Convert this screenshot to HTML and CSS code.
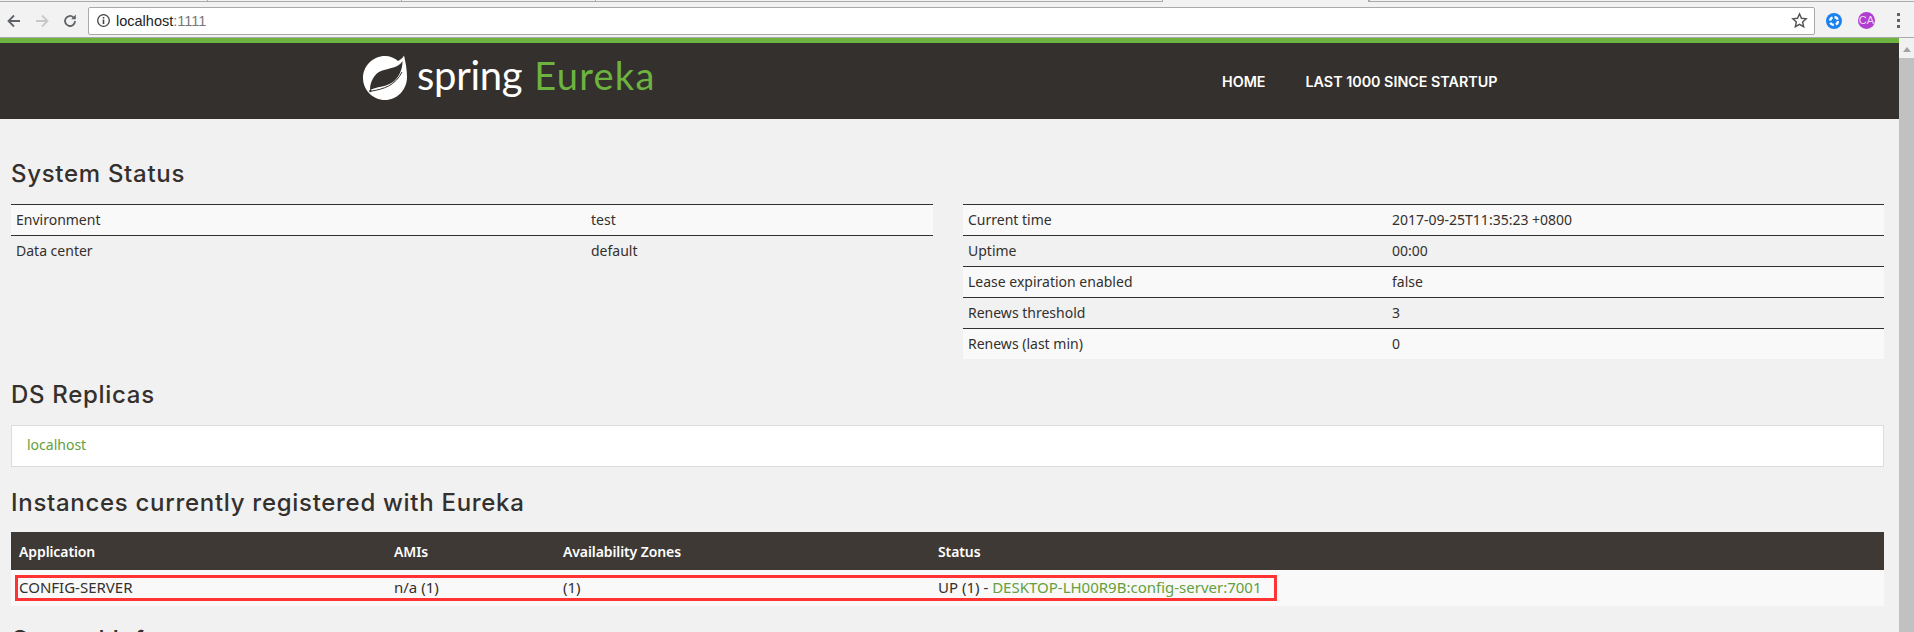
FILE: index.html
```html
<!DOCTYPE html>
<html lang="en">
<head>
  <meta charset="UTF-8" />
  <title>Eureka</title>
  <link rel="stylesheet" href="styles.css">
</head>
<body>
  <div class="tabstrip">
    <span class="tab tab-a"></span>
    <span class="tab"></span>
    <span class="tab"></span>
    <span class="tab tab-wide"></span>
    <span class="tab tab-active"></span>
    <span class="tab tab-rest"></span>
  </div>
  <div class="toolbar">
    <svg class="nav-icon" viewBox="0 0 16 16"><path d="M14 8H3M8 2.500 2.500 8 8 13.500" fill="none" stroke="#5f6368" stroke-width="1.8"/></svg>
    <svg class="nav-icon" viewBox="0 0 16 16"><path d="M2 8h11M8 2.500 13.500 8 8 13.500" fill="none" stroke="#c8c8c8" stroke-width="1.8"/></svg>
    <svg class="nav-icon" viewBox="0 0 16 16"><path d="M13 8a5 5 0 1 1-1.600-3.700" fill="none" stroke="#5f6368" stroke-width="1.8"/><path d="M13.800 1.600v4.600H9.200z" fill="#5f6368"/></svg>
    <div class="omnibox">
      <svg class="info-icon" viewBox="0 0 16 16"><circle cx="8" cy="8" r="6.200" fill="none" stroke="#444" stroke-width="1.4"/><path d="M8 7v4.600M8 4.200v1.600" stroke="#444" stroke-width="1.7"/></svg>
      <span class="host">localhost</span><span class="port">:1111</span>
      <svg class="star-icon" viewBox="0 0 18 18"><path d="M9 2l2.100 4.700 5 .5-3.800 3.400 1.100 5L9 13l-4.400 2.600 1.100-5L1.900 7.200l5-.5z" fill="none" stroke="#555" stroke-width="1.5"/></svg>
    </div>
    <svg class="ext-icon" viewBox="0 0 16 16"><circle cx="8" cy="8" r="8" fill="#1a82f0"/><circle cx="8" cy="8" r="4" fill="none" stroke="#fff" stroke-width="2.4" stroke-dasharray="4.200 2.100"/></svg>
    <div class="ext-badge">CA</div>
    <div class="menu-dots"><i></i><i></i><i></i></div>
  </div>
  <div class="viewport">
    <div class="page">
      <nav class="navbar">
        <div class="brand">
          <svg class="leaf" viewBox="7 9 46 46">
            <path d="M49 9.500C50 14 52 22 52 31 52 44 42 54 30 54 18 54 8 44 8 32 8 20 18 10 30 10c5 0 10 2 13 5 2-1 5-3 6-5.500z" fill="#fff"/>
            <path d="M47.500 15C44 22 34 22 26 25 19 28 15 36 15 44c9-4 16-3 23-8 6-5 9.500-12 9.500-21z" fill="#34302d"/>
            <path d="M17 45c11-2 23-5 30-19" fill="none" stroke="#34302d" stroke-width="1"/>
            <circle cx="15.500" cy="45" r="1.300" fill="#34302d"/>
          </svg>
          <span class="brand-spring">spring</span>
          <span class="brand-eureka">Eureka</span>
        </div>
        <ul class="nav-links">
          <li>Home</li>
          <li>Last 1000 since startup</li>
        </ul>
      </nav>

      <main class="content">
        <h2 class="first">System Status</h2>
        <div class="status-row">
          <table class="info left">
            <tr><td>Environment</td><td>test</td></tr>
            <tr><td>Data center</td><td>default</td></tr>
          </table>
          <table class="info right">
            <tr><td>Current time</td><td>2017-09-25T11:35:23 +0800</td></tr>
            <tr><td>Uptime</td><td>00:00</td></tr>
            <tr><td>Lease expiration enabled</td><td>false</td></tr>
            <tr><td>Renews threshold</td><td>3</td></tr>
            <tr><td>Renews (last min)</td><td>0</td></tr>
          </table>
        </div>

        <h2 class="replicas-title">DS Replicas</h2>
        <div class="replicas"><a>localhost</a></div>

        <h2 class="instances-title">Instances currently registered with Eureka</h2>
        <div class="instances-wrap">
          <table class="instances">
            <thead>
              <tr><th class="c-app">Application</th><th class="c-ami">AMIs</th><th class="c-zone">Availability Zones</th><th>Status</th></tr>
            </thead>
            <tbody>
              <tr>
                <td>CONFIG-SERVER</td>
                <td>n/a (1)</td>
                <td>(1)</td>
                <td>UP (1) - <a>DESKTOP-LH00R9B:config-server:7001</a></td>
              </tr>
            </tbody>
          </table>
          <div class="highlight"></div>
        </div>

        <h2 class="info-title">General Info</h2>
      </main>
    </div>
    <div class="scrollbar">
      <span class="scroll-up"></span>
      <span class="scroll-thumb"></span>
    </div>
  </div>
</body>
</html>
```

FILE: styles.css
```css
html, body {
  margin: 0;
  height: 632px;
  overflow: hidden;
}

body {
  font-family: 'Noto Sans', 'Open Sans', sans-serif;
  font-size: 14px;
  color: #34302d;
  background: #f1f1f1;
}

/* browser chrome */
.tabstrip {
  display: flex;
  height: 4px;
  background: #f2f2f2;
}

.tab {
  width: 193px;
  height: 1px;
  border-bottom: 1px solid #a9a9a9;
  border-right: 1px solid #a9a9a9;
}

.tab-a { width: 207px; }
.tab-wide { width: 566px; }

.tab-active {
  width: 205px;
  height: 2px;
  border-bottom: none;
  background: #f2f2f2;
}

.tab-rest {
  flex: 1;
  border-right: none;
  border-left: 1px solid #a9a9a9;
}

.toolbar {
  display: flex;
  align-items: center;
  height: 34px;
  padding-left: 6px;
  box-sizing: border-box;
  background: #f2f2f2;
  border-bottom: 1px solid #a9a9a9;
}

.nav-icon {
  width: 16px;
  height: 16px;
  margin-right: 12px;
}

.omnibox {
  display: flex;
  align-items: center;
  width: 1727px;
  height: 28px;
  box-sizing: border-box;
  margin-left: -2px;
  padding: 0 6px 0 7px;
  background: #fff;
  border: 1px solid #a9a9a9;
  border-radius: 2px;
  font-family: 'Liberation Sans', sans-serif;
  font-size: 14.500px;
}

.info-icon {
  width: 15px;
  height: 15px;
  margin-right: 5px;
}

.host { color: #222; }
.port { color: #777; }

.star-icon {
  width: 17px;
  height: 17px;
  margin-left: auto;
}

.ext-icon {
  width: 16px;
  height: 16px;
  margin-left: 11px;
}

.ext-badge {
  width: 17px;
  height: 17px;
  margin-left: 16px;
  border-radius: 50%;
  background: #b03fd0;
  color: #f0d8f6;
  font-family: 'Liberation Sans', sans-serif;
  font-size: 11px;
  line-height: 17px;
  text-align: center;
}

.menu-dots {
  display: flex;
  flex-direction: column;
  gap: 3px;
  margin-left: 22px;
}

.menu-dots i {
  display: block;
  width: 3px;
  height: 3px;
  background: #5f6368;
}

/* page */
.viewport {
  display: flex;
  height: 594px;
}

.page {
  flex: 1;
  min-width: 0;
  overflow: hidden;
}

.scrollbar {
  display: flex;
  flex-direction: column;
  width: 15px;
  padding-top: 5px;
  background: #f1f1f1;
}

.scroll-up {
  width: 0;
  height: 0;
  margin: 4px auto 6px;
  border-left: 4px solid transparent;
  border-right: 4px solid transparent;
  border-bottom: 5px solid #a3a3a3;
}

.scroll-thumb {
  flex: 1;
  background: #c1c1c1;
}

.navbar {
  display: flex;
  align-items: center;
  height: 76px;
  padding-left: 362px;
  background: #34302d;
  border-top: 5px solid #6db33f;
}

.brand {
  display: flex;
  align-items: center;
  width: 860px;
  margin-top: -6px;
}

.leaf {
  width: 46px;
  height: 46px;
  margin-right: 9px;
}

.brand-spring {
  margin-top: -6px;
  color: #fff;
  font-family: 'Lato', sans-serif;
  font-size: 40px;
  letter-spacing: -0.300px;
  margin-right: 12px;
}

.brand-eureka {
  margin-top: -6px;
  color: #6db33f;
  font-family: 'Lato', sans-serif;
  font-size: 38px;
  letter-spacing: 1.300px;
}

.nav-links {
  display: flex;
  gap: 40px;
  margin: 0;
  padding: 0;
  list-style: none;
  color: #fff;
  font-family: 'Inter', sans-serif;
  font-size: 14.300px;
  font-weight: 600;
  text-transform: uppercase;
}

.content {
  padding: 0 15px 0 11px;
}

h2 {
  margin: 0;
  box-sizing: border-box;
  font-family: 'Inter', sans-serif;
  font-size: 24px;
  font-weight: 500;
  letter-spacing: 0.700px;
  line-height: 30px;
  color: #34302d;
}

h2.first {
  height: 85px;
  padding-top: 40px;
}

h2.replicas-title {
  height: 59px;
  padding-top: 14px;
}

h2.instances-title {
  height: 65px;
  padding-top: 21px;
}

h2.info-title {
  padding-top: 19px;
}

.status-row {
  display: flex;
  justify-content: space-between;
  height: 162px;
}

table {
  border-collapse: collapse;
  table-layout: fixed;
}

.info {
  width: 922px;
  height: min-content;
}

.info td {
  height: 28px;
  padding: 0 5px 2px;
  border-top: 1px solid #34302d;
}

.info.right { width: 921px; }
.info tr:nth-child(odd) { background: #f9f9f9; }
.info.left td:first-child { width: 565px; }
.info.right td:first-child { width: 414px; }

.replicas {
  height: 42px;
  box-sizing: border-box;
  padding: 9px 15px;
  background: #fff;
  border: 1px solid #dcdcdc;
}

a { color: #63a03c; }

.instances-wrap {
  position: relative;
}

.instances {
  width: 100%;
}

.instances th {
  height: 38px;
  padding: 0 8px;
  background: #3e3935;
  color: #fff;
  font-weight: 600;
  letter-spacing: -0.100px;
  text-align: left;
}

.c-app { width: 359px; }
.c-ami { width: 153px; }
.c-zone { width: 359px; }

.instances td {
  height: 34px;
  padding: 0 8px 2px;
  background: #f9f9f9;
  font-size: 15px;
}

/* red annotation drawn on the screenshot */
.highlight {
  position: absolute;
  left: 4px;
  top: 43px;
  width: 1256px;
  height: 20px;
  border: 3px solid #f33;
}
```
